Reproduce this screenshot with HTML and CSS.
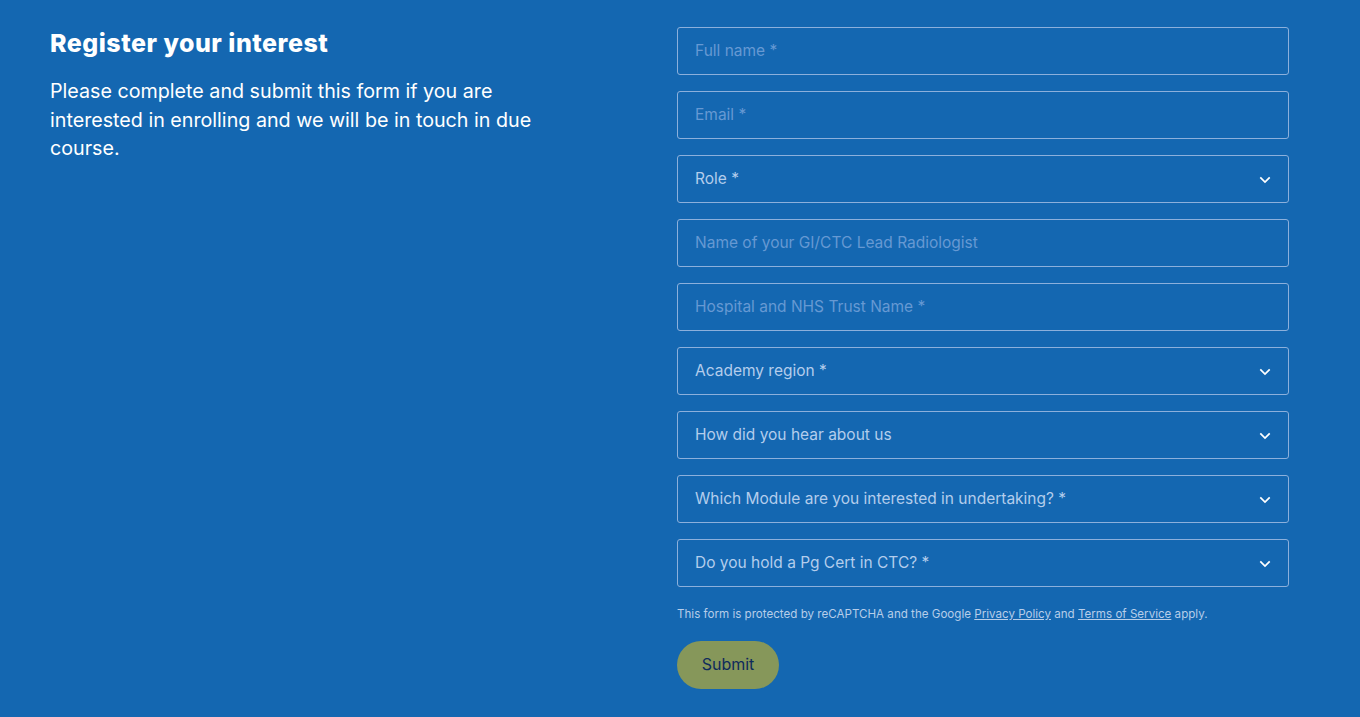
FILE: index.html
```html
<!DOCTYPE html>
<html lang="en">
<head>
  <meta charset="UTF-8">
  <meta name="viewport" content="width=device-width, initial-scale=1.0">
  <title>Register your interest</title>
  <link rel="stylesheet" href="styles.css">
</head>
<body>
  <div class="container">
    <div class="intro">
      <h1>Register your interest</h1>
      <p>Please complete and submit this form if you are interested in enrolling and we will be in touch in due course.</p>
    </div>
    <form class="form">
      <input type="text" class="field" placeholder="Full name *">
      <input type="email" class="field" placeholder="Email *">
      <div class="select-wrap">
        <select class="field">
          <option>Role *</option>
        </select>
        <svg class="chevron" viewBox="0 0 14 9"><path d="M1.5 1.5 7 7l5.5-5.5"/></svg>
      </div>
      <input type="text" class="field" placeholder="Name of your GI/CTC Lead Radiologist">
      <input type="text" class="field" placeholder="Hospital and NHS Trust Name *">
      <div class="select-wrap">
        <select class="field">
          <option>Academy region *</option>
        </select>
        <svg class="chevron" viewBox="0 0 14 9"><path d="M1.5 1.5 7 7l5.5-5.5"/></svg>
      </div>
      <div class="select-wrap">
        <select class="field">
          <option>How did you hear about us</option>
        </select>
        <svg class="chevron" viewBox="0 0 14 9"><path d="M1.5 1.5 7 7l5.5-5.5"/></svg>
      </div>
      <div class="select-wrap">
        <select class="field">
          <option>Which Module are you interested in undertaking? *</option>
        </select>
        <svg class="chevron" viewBox="0 0 14 9"><path d="M1.5 1.5 7 7l5.5-5.5"/></svg>
      </div>
      <div class="select-wrap">
        <select class="field">
          <option>Do you hold a Pg Cert in CTC? *</option>
        </select>
        <svg class="chevron" viewBox="0 0 14 9"><path d="M1.5 1.5 7 7l5.5-5.5"/></svg>
      </div>
      <p class="recaptcha">This form is protected by reCAPTCHA and the Google <a href="#">Privacy Policy</a> and <a href="#">Terms of Service</a> apply.</p>
      <div>
        <button type="submit" class="submit">Submit</button>
      </div>
    </form>
  </div>
</body>
</html>
```

FILE: styles.css
```css
html, body {
  margin: 0;
  background: #1467b1;
}
body {
  font-family: Inter, "Noto Sans", sans-serif;
  color: #fff;
  min-height: 717px;
}
.container {
  display: grid;
  grid-template-columns: 1fr 612px;
  padding: 27px 71px 0 50px;
}
.intro h1 {
  font-size: 25px;
  font-weight: 800;
  letter-spacing: 0.5px;
  margin: 0;
  line-height: 32px;
}
.intro p {
  font-size: 19.7px;
  line-height: 28.5px;
  margin: 18px 0 0;
  max-width: 500px;
}
.form {
  display: flex;
  flex-direction: column;
  gap: 16px;
}
.field {
  display: block;
  width: 100%;
  box-sizing: border-box;
  height: 48px;
  padding: 0 17px 2px;
  border: 1px solid #8cb0dc;
  border-radius: 3px;
  background: transparent;
  color: #b3cdec;
  font-family: inherit;
  font-size: 15.5px;
  outline: none;
}
.field::placeholder {
  color: #6699d3;
}
select.field {
  appearance: none;
  -webkit-appearance: none;
}
.select-wrap {
  position: relative;
}
.chevron {
  position: absolute;
  right: 18px;
  top: 21px;
  width: 12px;
  height: 8px;
  fill: none;
  stroke: #fff;
  stroke-width: 2;
  pointer-events: none;
}
.recaptcha {
  font-size: 11.6px;
  color: #b6cde9;
  margin: 3px 0 0;
  line-height: 16px;
}
.recaptcha a {
  color: #b6cde9;
}
.submit {
  width: 102px;
  height: 48px;
  padding: 0 0 2px;
  border: none;
  border-radius: 24px;
  background: #86975a;
  color: #0f2a5c;
  font-family: inherit;
  font-size: 16px;
  margin-top: 3px;
}
```
